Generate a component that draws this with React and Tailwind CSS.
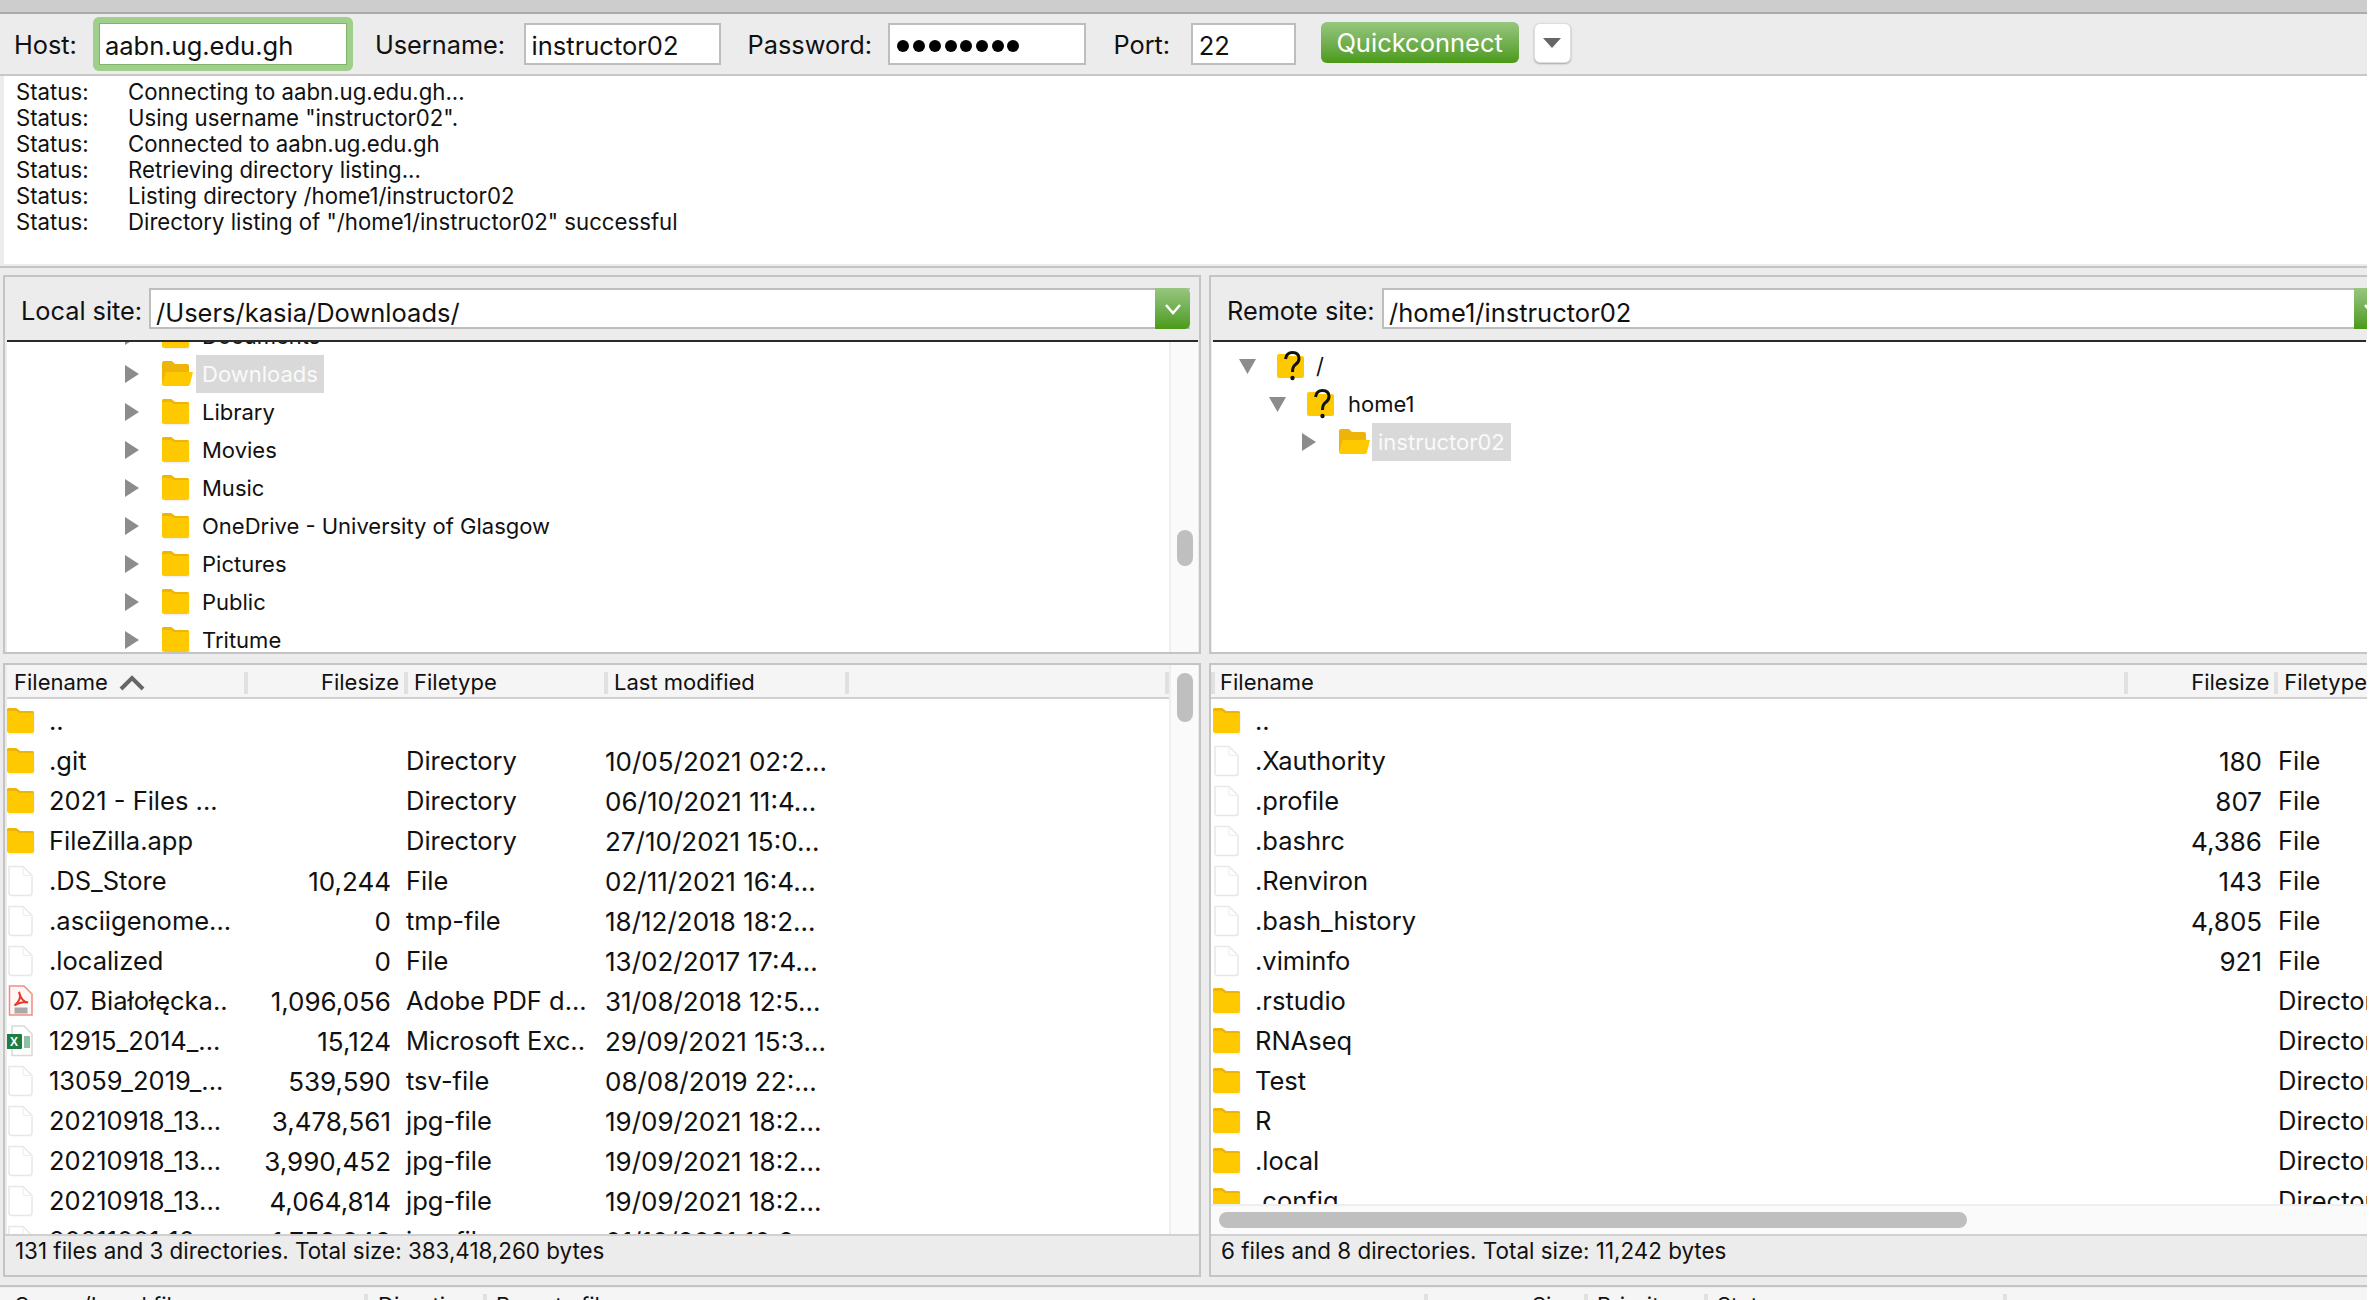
const statusLines = [
    "Connecting to aabn.ug.edu.gh...",
    'Using username "instructor02".',
    "Connected to aabn.ug.edu.gh",
    "Retrieving directory listing...",
    "Listing directory /home1/instructor02",
    'Directory listing of "/home1/instructor02" successful',
];

const localTree = ["Documents", "Downloads", "Library", "Movies", "Music", "OneDrive - University of Glasgow", "Pictures", "Public", "Tritume"];

const localFiles = [
    ["folder", "..", "", "", ""],
    ["folder", ".git", "", "Directory", "10/05/2021 02:2..."],
    ["folder", "2021 - Files ...", "", "Directory", "06/10/2021 11:4..."],
    ["folder", "FileZilla.app", "", "Directory", "27/10/2021 15:0..."],
    ["file", ".DS_Store", "10,244", "File", "02/11/2021 16:4..."],
    ["file", ".asciigenome...", "0", "tmp-file", "18/12/2018 18:2..."],
    ["file", ".localized", "0", "File", "13/02/2017 17:4..."],
    ["pdf", "07. Białołęcka..", "1,096,056", "Adobe PDF d...", "31/08/2018 12:5..."],
    ["excel", "12915_2014_...", "15,124", "Microsoft Exc..", "29/09/2021 15:3..."],
    ["file", "13059_2019_...", "539,590", "tsv-file", "08/08/2019 22:..."],
    ["file", "20210918_13...", "3,478,561", "jpg-file", "19/09/2021 18:2..."],
    ["file", "20210918_13...", "3,990,452", "jpg-file", "19/09/2021 18:2..."],
    ["file", "20210918_13...", "4,064,814", "jpg-file", "19/09/2021 18:2..."],
    ["file", "20211001_10...", "1,758,848", "jpg-file", "01/10/2021 10:2..."],
];

const remoteFiles = [
    ["folder", "..", "", ""],
    ["file", ".Xauthority", "180", "File"],
    ["file", ".profile", "807", "File"],
    ["file", ".bashrc", "4,386", "File"],
    ["file", ".Renviron", "143", "File"],
    ["file", ".bash_history", "4,805", "File"],
    ["file", ".viminfo", "921", "File"],
    ["folder", ".rstudio", "", "Directory"],
    ["folder", "RNAseq", "", "Directory"],
    ["folder", "Test", "", "Directory"],
    ["folder", "R", "", "Directory"],
    ["folder", ".local", "", "Directory"],
    ["folder", ".config", "", "Directory"],
];

function FolderIcon() {
    return (
        <svg width="30" height="28" viewBox="0 0 30 28" className="shrink-0">
            <path d="M2 3.5 Q2 2 3.5 2 H11 L15 5 H27 Q28 5 28 6.5 V25 Q28 26.5 26.5 26.5 H3.5 Q2 26.5 2 25 Z" fill="#f0f0f0" transform="translate(0.7 0.9)" />
            <path d="M1 3 Q1 1 3 1 H10 L14 4 H26 Q28 4 28 6 V24 Q28 26 26 26 H3 Q1 26 1 24 Z" fill="#ffc900" />
            <path d="M1 3 Q1 1 3 1 H10 L14 4 H26 Q28 4 28 6 H13 L10 4 H1 Z" fill="#eeb40a" />
        </svg>
    );
}

function OpenFolderIcon() {
    return (
        <svg width="34" height="28" viewBox="0 0 34 28" className="shrink-0">
            <path d="M1 3 Q1 1 3 1 H11 L14 4 H26 Q28 4 28 6 V25 H3 Q1 25 1 23 Z" fill="#eeb40a" />
            <path d="M5 12 H32 L29 24 Q28.600 26 27 26 H3 Q1 26 1 24 Z" fill="#ffc900" />
        </svg>
    );
}

function QuestionIcon() {
    return (
        <svg width="30" height="32" viewBox="0 0 30 32" className="shrink-0">
            <path d="M1 6 Q1 4 3 4 H10 L13 6 H26 Q28 6 28 8 V26 Q28 28 26 28 H3 Q1 28 1 26 Z" fill="#ffc900" />
            <path d="M9.500 9 Q10.500 2.500 16.500 2.500 Q23 2.500 23 8.500 Q23 12 19.500 14.500 Q16.500 16.500 16.500 22" fill="none" stroke="#111111" strokeWidth="3" />
            <circle cx="16.500" cy="28" r="2.200" fill="#111111" />
        </svg>
    );
}

function FileIcon() {
    return (
        <svg width="28" height="32" viewBox="0 0 28 32" className="shrink-0">
            <path d="M3 1.500 H17 L26 10.500 V28 Q26 30.500 23.500 30.500 H5.500 Q3 30.500 3 28 Z" fill="#ffffff" stroke="#e8e8e8" strokeWidth="1.5" />
            <path d="M17 1.500 V8 Q17 10.500 19.500 10.500 H26" fill="none" stroke="#eeeeee" strokeWidth="1.2" />
        </svg>
    );
}

function PdfIcon() {
    return (
        <svg width="28" height="32" viewBox="0 0 28 32" className="shrink-0">
            <path d="M3.500 1 H18 L26 9 V30 H3.500 Z" fill="#fff7f6" stroke="#f08d84" strokeWidth="1.5" />
            <path d="M13 7 C15 11 15 15 8.500 20.500 C13 17.500 19 16.500 22 17.500 C17 17 14.500 13 13 7 Z" fill="none" stroke="#e8372b" strokeWidth="2" />
            <rect x="8.500" y="22.500" width="13" height="6" fill="#a9a9a9" />
        </svg>
    );
}

function ExcelIcon() {
    return (
        <svg width="28" height="32" viewBox="0 0 28 32" className="shrink-0">
            <path d="M6 1 H18 L26 9 V30.500 H6 Z" fill="#ffffff" stroke="#d9d9d9" strokeWidth="1.5" />
            <rect x="18" y="11" width="6" height="12" fill="#8fc0a2" />
            <rect x="0" y="9" width="16" height="15" rx="1" fill="#1e7c45" />
            <text x="8" y="21" textAnchor="middle" fontSize="12" fontFamily="Liberation Sans, sans-serif" fontWeight="700" fill="#ffffff">X</text>
        </svg>
    );
}

const listIcons = { folder: FolderIcon, file: FileIcon, pdf: PdfIcon, excel: ExcelIcon };

function Arrow({ open }) {
    return (
        <svg width="18" height="20" viewBox="0 0 18 20" className="shrink-0">
            {open ? <path d="M1 3 H18 L9.500 18 Z" fill="#8c8c8c" /> : <path d="M2 1 L16 10 L2 19 Z" fill="#8c8c8c" />}
        </svg>
    );
}

function Field({ label, value, labelClass, inputClass, children }) {
    return (
        <>
            <span className={`pt-[2px] shrink-0 ${labelClass}`}>{label}</span>
            {children ?? (
                <div className={`h-[42px] bg-white border-2 border-[#bdbdbd] flex items-center pl-[6px] pt-[4px] text-[25.500px] ${inputClass}`}>
                    {value}
                </div>
            )}
        </>
    );
}

function Toolbar() {
    return (
        <div className="h-[62px] flex items-center border-b-2 border-[#c8c8c8] text-[25.300px] text-[#111111]">
            <Field label="Host:" labelClass="ml-[14px] mr-[16px]">
                <div className="w-[260px] h-[54px] shrink-0 rounded-[6px] bg-[#a0cf8c] p-[6px]">
                    <div className="h-full bg-white flex items-center pl-[5px] pt-[4px] text-[25.500px] border border-[#7fb56b]">aabn.ug.edu.gh</div>
                </div>
            </Field>
            <Field label="Username:" value="instructor02" labelClass="ml-[22px] mr-[18.500px]" inputClass="w-[197px]" />
            <Field label="Password:" labelClass="ml-[27px] mr-[16.500px]">
                <div className="w-[198px] h-[42px] bg-white border-2 border-[#bdbdbd] flex items-center pl-[7px] pt-[3px] gap-[3.700px]">
                    {[0, 1, 2, 3, 4, 5, 6, 7].map((i) => (
                        <span key={i} className="w-[12px] h-[12px] rounded-full bg-black" />
                    ))}
                </div>
            </Field>
            <Field label="Port:" value="22" labelClass="ml-[27px] mr-[20.500px]" inputClass="w-[105px]" />
            <button className="ml-[25px] w-[198px] h-[41px] -mt-[3px] pt-[2px] rounded-[6px] bg-gradient-to-b from-[#98c67e] to-[#4a9a14] text-white text-[25.500px]">
                Quickconnect
            </button>
            <button className="ml-[15px] w-[37px] h-[40px] -mt-[3px] rounded-[6px] bg-white border border-[#dddddd] shadow-[0_1px_2px_rgba(0,0,0,0.3)] flex items-center justify-center">
                <svg width="18" height="10" viewBox="0 0 18 10">
                    <path d="M0 0 H18 L9 10 Z" fill="#666666" />
                </svg>
            </button>
        </div>
    );
}

function StatusLog() {
    return (
        <div className="h-[188px] ml-[4px] bg-white pl-[12px] pt-[3px] text-[22.200px] leading-[26px] text-[#111111]">
            {statusLines.map((line) => (
                <div key={line} className="flex">
                    <span className="w-[112px]">Status:</span>
                    <span>{line}</span>
                </div>
            ))}
        </div>
    );
}

function SiteBar({ label, value, labelWidth, inputClass }) {
    return (
        <div className="h-[65px] flex items-center border-b-2 border-[#2a2a2a] ml-[2px] mr-[1px] text-[25.300px] text-[#111111]">
            <span className={`pl-[14px] pt-[4px] shrink-0 ${labelWidth}`}>{label}</span>
            <div className={`h-[41px] flex bg-white border-2 border-r-0 border-[#bdbdbd] ${inputClass}`}>
                <div className="flex-1 pl-[5px] pt-[4px] text-[25.500px] whitespace-nowrap">{value}</div>
                <div className="w-[35px] -my-[2px] rounded-r-[5px] bg-gradient-to-b from-[#98c67e] to-[#4a9a14] flex items-center justify-center">
                    <svg width="18" height="12" viewBox="0 0 18 12">
                        <path d="M2 2 L9 10 L16 2" fill="none" stroke="#ffffff" strokeWidth="2.500" />
                    </svg>
                </div>
            </div>
        </div>
    );
}

function TreeRow({ indent, arrow, icon, label, selected, labelGap = "ml-[9px]" }) {
    return (
        <div className="h-[38px] flex items-center text-[22px] text-[#111111]" style={{ paddingLeft: indent }}>
            {arrow}
            <div className="w-[20px] shrink-0" />
            {icon}
            <span className={`${labelGap} px-[6px] h-[38px] leading-[38px] whitespace-nowrap ${selected ? "bg-[#d9d9d9] text-[#fafafa]" : ""}`}>{label}</span>
        </div>
    );
}

function ScrollTrack({ thumbClass }) {
    return (
        <div className="w-[29px] shrink-0 bg-[#fafafa] border-l-2 border-[#eeeeee] pl-[6px]">
            <div className={`w-[16px] rounded-full bg-[#bfbfbf] ${thumbClass}`} />
        </div>
    );
}

function HeaderCell({ className, children }) {
    return <div className={`h-[22px] flex items-center border-r-4 border-[#e0e0e0] ${className}`}>{children}</div>;
}

function LocalPanel() {
    return (
        <div className="w-[1198px] shrink-0 flex flex-col">
            <div className="h-[379px] border-2 border-[#c4c4c4] flex flex-col">
                <SiteBar label="Local site:" value="/Users/kasia/Downloads/" labelWidth="w-[142px]" inputClass="flex-1 min-w-0 mr-[8px]" />
                <div className="flex-1 min-h-0 flex ml-[2px] mr-[1px] bg-white overflow-hidden">
                    <div className="flex-1 -mt-[25px] overflow-hidden">
                        {localTree.map((name) => (
                            <TreeRow
                                key={name}
                                indent={116}
                                arrow={<Arrow />}
                                icon={name === "Downloads" ? <OpenFolderIcon /> : <FolderIcon />}
                                label={name}
                                selected={name === "Downloads"}
                                labelGap={name === "Downloads" ? "ml-[1px]" : "ml-[5px]"}
                            />
                        ))}
                    </div>
                    <ScrollTrack thumbClass="mt-[188px] h-[36px]" />
                </div>
            </div>
            <div className="mt-[9px] h-[614px] border-2 border-[#c4c4c4] flex flex-col">
                <div className="flex-1 min-h-0 flex ml-[2px] mr-[1px] bg-white overflow-hidden">
                    <div className="flex-1 min-w-0 flex flex-col overflow-hidden">
                        <div className="h-[34px] shrink-0 pt-[3px] bg-[#f5f5f5] border-b-2 border-[#d0d0d0] flex items-center text-[22px] text-[#111111]">
                            <HeaderCell className="w-[241px] pl-[7px] gap-[11px]">
                                Filename
                                <svg width="26" height="16" viewBox="0 0 26 16">
                                    <path d="M2 14 L13 3 L24 14" fill="none" stroke="#666666" strokeWidth="4" />
                                </svg>
                            </HeaderCell>
                            <HeaderCell className="w-[160px] justify-end pr-[5px]">Filesize</HeaderCell>
                            <HeaderCell className="w-[200px] pl-[6px]">Filetype</HeaderCell>
                            <HeaderCell className="w-[241px] pl-[6px]">Last modified</HeaderCell>
                            <div className="flex-1" />
                            <div className="h-[22px] border-r-4 border-[#e0e0e0]" />
                        </div>
                        <div className="flex-1 min-h-0 overflow-hidden pt-[2px]">
                            {localFiles.map(([kind, name, size, type, modified], i) => {
                                const Icon = listIcons[kind];
                                return (
                                    <div key={i} className="h-[40px] flex items-center text-[25.500px] text-[#111111] whitespace-nowrap">
                                        <div className="w-[43px] shrink-0 -ml-[1px]"><Icon /></div>
                                        <div className="w-[185px] shrink-0">{name}</div>
                                        <div className="w-[157px] shrink-0 text-right text-[26px]">{size}</div>
                                        <div className="w-[196px] shrink-0 pl-[15px] overflow-hidden">{type}</div>
                                        <div className="shrink-0 pl-[18px] text-[26px]">{modified}</div>
                                    </div>
                                );
                            })}
                        </div>
                    </div>
                    <ScrollTrack thumbClass="mt-[8px] h-[49px]" />
                </div>
                <div className="h-[41px] shrink-0 border-t-2 border-[#d0d0d0] pl-[10px] pt-[1px] text-[22.400px] leading-[28px] text-[#111111] whitespace-nowrap">
                    131 files and 3 directories. Total size: 383,418,260 bytes
                </div>
            </div>
        </div>
    );
}

function RemotePanel() {
    return (
        <div className="flex-1 min-w-0 flex flex-col">
            <div className="h-[379px] border-l-2 border-y-2 border-[#c4c4c4] flex flex-col">
                <SiteBar label="Remote site:" value="/home1/instructor02" labelWidth="w-[169px]" inputClass="w-[1007px] shrink-0" />
                <div className="flex-1 min-h-0 bg-white pt-[5px] ml-[1px]">
                    <TreeRow indent={26} arrow={<Arrow open />} icon={<QuestionIcon />} label="/" labelGap="ml-[4px]" />
                    <TreeRow indent={56} arrow={<Arrow open />} icon={<QuestionIcon />} label="home1" labelGap="ml-[6px]" />
                    <TreeRow indent={88} arrow={<Arrow />} icon={<OpenFolderIcon />} label="instructor02" labelGap="ml-0" selected />
                </div>
            </div>
            <div className="mt-[9px] h-[614px] border-l-2 border-y-2 border-[#c4c4c4] flex flex-col">
                <div className="flex-1 min-h-0 flex flex-col bg-white overflow-hidden">
                    <div className="h-[34px] shrink-0 pt-[3px] bg-[#f5f5f5] border-b-2 border-[#d0d0d0] flex items-center text-[22px] text-[#111111] whitespace-nowrap">
                        <HeaderCell className="w-[919px] pl-[5px] border-l-4">Filename</HeaderCell>
                        <HeaderCell className="w-[150px] justify-end pr-[5px]">Filesize</HeaderCell>
                        <div className="pl-[6px]">Filetype</div>
                    </div>
                    <div className="flex-1 min-h-0 overflow-hidden pt-[2px]">
                        {remoteFiles.map(([kind, name, size, type], i) => {
                            const Icon = listIcons[kind];
                            return (
                                <div key={i} className="h-[40px] flex items-center text-[25.500px] text-[#111111] whitespace-nowrap">
                                    <div className="w-[44px] shrink-0 pl-[1px]"><Icon /></div>
                                    <div className="w-[936px] shrink-0">{name}</div>
                                    <div className="w-[71px] shrink-0 text-right text-[26px]">{size}</div>
                                    <div className="pl-[16px]">{type}</div>
                                </div>
                            );
                        })}
                    </div>
                    <div className="h-[30px] shrink-0 bg-[#fafafa] border-t-2 border-[#eeeeee] pt-[6px] pl-[8px]">
                        <div className="w-[748px] h-[16px] rounded-full bg-[#bfbfbf]" />
                    </div>
                </div>
                <div className="h-[41px] shrink-0 border-t-2 border-[#d0d0d0] pl-[10px] pt-[1px] text-[22.400px] leading-[28px] text-[#111111] whitespace-nowrap">
                    6 files and 8 directories. Total size: 11,242 bytes
                </div>
            </div>
        </div>
    );
}

function QueueHeader() {
    const cols = [
        ["Server/Local file", "w-[368px] pl-[15px]"],
        ["Direction", "w-[119px] pl-[10px]"],
        ["Remote file", "w-[941px] pl-[9px]"],
        ["Size", "w-[160px] justify-end pr-[8px]"],
        ["Priority", "w-[120px] pl-[9px]"],
        ["Status", "w-[299px] pl-[9px]"],
    ];
    return (
        <div className="mt-[8px] h-[15px] shrink-0 border-t-2 border-[#c4c4c4] pt-[1px] overflow-hidden">
            <div className="h-[12px] bg-[#f5f5f5] flex text-[22px] leading-[22px] text-[#111111] whitespace-nowrap">
                {cols.map(([label, cls]) => (
                    <div key={label} className={`h-[22px] mt-[6px] flex items-start border-r-4 border-[#e0e0e0] ${cls}`}>{label}</div>
                ))}
            </div>
        </div>
    );
}

export default function App() {
    return (
        <div className="w-[2370px] h-[1300px] overflow-hidden bg-white font-['Inter',sans-serif]">
            <div className="w-[2367px] h-[1300px] bg-[#ececec] overflow-hidden flex flex-col">
                <div className="h-[14px] shrink-0 bg-[#cdcdcd] border-b-2 border-[#ababab]" />
                <Toolbar />
                <StatusLog />
                <div className="h-[4px] shrink-0 border-b-2 border-[#c4c4c4]" />
                <div className="mt-[7px] flex gap-[8px] pl-[3px]">
                    <LocalPanel />
                    <RemotePanel />
                </div>
                <QueueHeader />
            </div>
        </div>
    );
}
